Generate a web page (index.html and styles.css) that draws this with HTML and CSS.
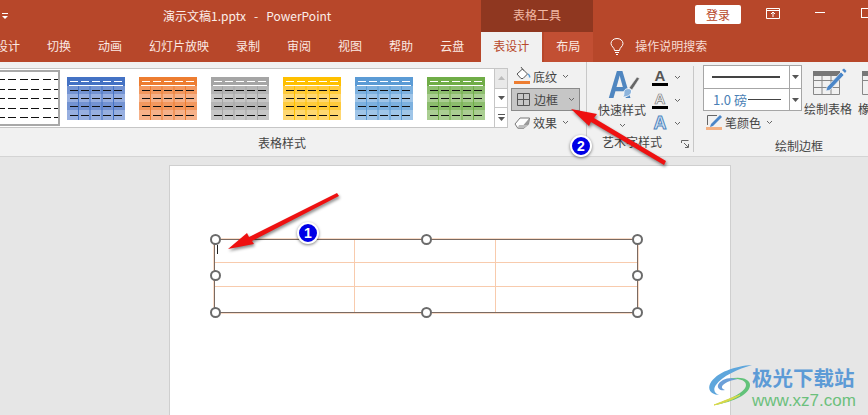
FILE: index.html
```html
<!DOCTYPE html>
<html lang="zh">
<head>
<meta charset="utf-8">
<title>演示文稿1.pptx - PowerPoint</title>
<link rel="stylesheet" href="styles.css">
</head>
<body>
<svg class="defs" width="0" height="0" aria-hidden="true">
  <symbol id="chev" viewBox="0 0 7 5"><path d="M1 1l2.5 2.5L6 1" fill="none" stroke="#666" stroke-width="1"/></symbol>
  <symbol id="tri" viewBox="0 0 7 4"><path d="M0 0h7L3.5 4z" fill="#555"/></symbol>
  <symbol id="swatch" viewBox="0 0 58 43">
    <rect width="58" height="43" style="fill:var(--dark)"/>
    <rect y="9" width="58" height="8" style="fill:var(--mid)"/>
    <rect y="17" width="58" height="8" style="fill:var(--light)"/>
    <rect y="25" width="58" height="8" style="fill:var(--mid)"/>
    <rect y="33" width="58" height="10" style="fill:var(--light)"/>
    <path d="M11.5 9v34M23 9v34M35 9v34M46.5 9v34" style="stroke:var(--dark)" stroke-width="1"/>
    <path d="M2 8.500h54" stroke="#fff" stroke-width="1"/>
    <path d="M3 4.500h8M14 4.500h8M25 4.500h8M36 4.500h8M47 4.500h8" stroke="#fff" stroke-width="1"/>
    <path d="M3 13.500h8M14 13.500h8M25 13.500h8M36 13.500h8M47 13.500h8M3 21.500h8M14 21.500h8M25 21.500h8M36 21.500h8M47 21.500h8M3 29.500h8M14 29.500h8M25 29.500h8M36 29.500h8M47 29.500h8M3 38.500h8M14 38.500h8M25 38.500h8M36 38.500h8M47 38.500h8" stroke="#111" stroke-width="1"/>
  </symbol>
</svg>

<div class="app">
  <header class="titlebar">
    <div class="qat"><svg class="qat-icon" width="6" height="7" viewBox="0 0 6 7"><path d="M0 .5h6" stroke="#fff"/><path d="M0 3h6L3 6z" fill="#fff"/></svg></div>
    <div class="doc-title">演示文稿1.pptx&nbsp;&nbsp; - &nbsp;&nbsp;PowerPoint</div>
    <div class="context-title">表格工具</div>
    <button class="login">登录</button>
    <svg class="win-icon" width="14" height="11" viewBox="0 0 14 11"><path d="M.5.500h13v10H.5zM.5 2.500h13M7 9V4.500M5 6l2-2 2 2" fill="none" stroke="#fff"/></svg>
    <span class="win-min"></span>
    <span class="win-max"></span>
  </header>

  <nav class="tabs">
    <span class="tab">设计</span>
    <span class="tab">切换</span>
    <span class="tab">动画</span>
    <span class="tab">幻灯片放映</span>
    <span class="tab">录制</span>
    <span class="tab">审阅</span>
    <span class="tab">视图</span>
    <span class="tab">帮助</span>
    <span class="tab tab-last">云盘</span>
    <span class="tab tab-active">表设计</span>
    <span class="tab tab-layout">布局</span>
    <svg class="bulb" width="14" height="17" viewBox="0 0 14 17"><path d="M4.500 12.500C4.500 9.500 1 8.500 1 5.500a6 5 0 0 1 12 0c0 3-3.500 4-3.500 7zM5 14.500h4M6 16.500h2" fill="none" stroke="#fff"/></svg>
    <span class="tell">操作说明搜索</span>
  </nav>

  <section class="ribbon">
    <div class="group group-styles">
      <div class="group-body">
        <div class="gallery">
          <div class="swatch-plain">
            <span class="dash-row"></span><span class="dash-row"></span><span class="dash-row"></span><span class="dash-row"></span><span class="dash-row"></span>
          </div>
          <svg class="swatch s-blue"><use href="#swatch"/></svg>
          <svg class="swatch s-orange"><use href="#swatch"/></svg>
          <svg class="swatch s-grey"><use href="#swatch"/></svg>
          <svg class="swatch s-gold"><use href="#swatch"/></svg>
          <svg class="swatch s-sky"><use href="#swatch"/></svg>
          <svg class="swatch s-green"><use href="#swatch"/></svg>
        </div>
        <div class="scroller">
          <span class="scroll-btn scroll-up"><svg width="7" height="4" viewBox="0 0 7 4"><path d="M0 4h7L3.500 0z" fill="#bbb"/></svg></span>
          <span class="scroll-btn"><svg width="7" height="4"><use href="#tri"/></svg></span>
          <span class="scroll-btn scroll-more"><i class="more-bar"></i><svg width="7" height="4"><use href="#tri"/></svg></span>
        </div>
        <div class="cmd-stack">
          <div class="cmd">
            <svg class="cmd-icon" width="17" height="18" viewBox="0 0 17 18"><path d="M3 7l5.500-5 5 5-4.500 4.500H7z" fill="#fff" stroke="#555"/><path d="M7 0l2.500 3.500" stroke="#555"/><path d="M14 7c1.500 1 2 2 1.500 3.500" fill="none" stroke="#5b9bd5" stroke-width="1.500"/><rect y="14" width="16" height="3" fill="#ed7d31"/></svg>
            <span>底纹</span><svg class="chev"><use href="#chev"/></svg>
          </div>
          <div class="cmd cmd-on">
            <svg class="cmd-icon" width="15" height="15" viewBox="0 0 15 15"><path d="M1.500 1.500h12v12h-12zM7.500 1.500v12M1.500 7.500h12" fill="none" stroke="#555"/></svg>
            <span>边框</span><svg class="chev chev-on"><use href="#chev"/></svg>
          </div>
          <div class="cmd">
            <svg class="cmd-icon" width="17" height="14" viewBox="0 0 17 14"><path d="M1 8l5-6h9.500l-1 6-5 4.500H4z" fill="#fdfdfd" stroke="#777"/><path d="M5 9h9.500l1-7L9.500 9z" fill="#9a9a9a"/><path d="M5 9l-1.500 3.500h5.500l5.500-3.500z" fill="#bdbdbd"/></svg>
            <span>效果</span><svg class="chev"><use href="#chev"/></svg>
          </div>
        </div>
      </div>
      <div class="group-label">表格样式</div>
    </div>

    <div class="group group-art">
      <div class="group-body">
        <div class="quick">
          <div class="quick-art">
            <span class="big-a">A</span>
            <svg class="brush" width="38" height="33" viewBox="0 0 38 33">
              <path d="M23 21L31 10l2.500 1.500L26 23z" fill="#666" stroke="#f1f1f1" stroke-width=".6"/>
              <path d="M20 22c3-1 6 0 5.500 3-.5 3-4 5-9 5 1.500-1.500 1.500-3 1.500-5 0-1.500 1-2.500 2-3z" fill="#8db4dc" stroke="#fff" stroke-width=".8"/>
            </svg>
          </div>
          <span class="quick-text">快速样式</span>
          <svg class="chev chev-under"><use href="#chev"/></svg>
        </div>
        <div class="a-stack">
          <div class="a-row"><span class="a-wrap"><span class="a a-fill">A</span><i class="a-bar"></i></span><svg class="chev"><use href="#chev"/></svg></div>
          <div class="a-row"><span class="a-wrap"><span class="a a-outline">A</span><i class="a-bar"></i></span><svg class="chev"><use href="#chev"/></svg></div>
          <div class="a-row"><span class="a-wrap"><span class="a a-effect">A</span></span><svg class="chev"><use href="#chev"/></svg></div>
        </div>
      </div>
      <div class="group-label label-art">艺术字样式
        <svg class="launcher" width="8" height="8" viewBox="0 0 8 8"><path d="M.5 3V.5H7.500M3 3l4 4M7.500 4v3.500H4" fill="none" stroke="#666"/></svg>
      </div>
    </div>

    <div class="group group-draw">
      <div class="group-body draw-body">
        <div class="pen-col">
          <div class="line-select"><span class="line-main"><i class="line-thick"></i></span><span class="line-drop"><svg width="7" height="4"><use href="#tri"/></svg></span></div>
          <div class="line-select line-second"><span class="line-main"><span class="weight">1.0 磅</span><i class="line-thin"></i></span><span class="line-drop"><svg width="7" height="4"><use href="#tri"/></svg></span></div>
          <div class="cmd pen-color">
            <svg class="cmd-icon" width="17" height="18" viewBox="0 0 17 18"><path d="M1.500 12V2.500H11" fill="none" stroke="#666"/><path d="M5 11l9-9 2 2-9 9-3 1z" fill="#4a86c8"/><rect y="14" width="16" height="3" fill="#f4b183"/></svg>
            <span>笔颜色</span><svg class="chev"><use href="#chev"/></svg>
          </div>
        </div>
        <div class="tool">
          <svg width="34" height="28" viewBox="0 0 34 28"><path d="M.5 4.500h26v22H.5zM.5 12.500h26M.5 19.500h26M9 8v19M18 8v19" fill="none" stroke="#888"/><rect width="27" height="5" y="3" fill="#777"/><path d="M14 19L28 4l3 3-14 15-4 1z" fill="#4a86c8" stroke="#f1f1f1" stroke-width=".7"/><path d="M29 2l2-1.500 2.500 2.500L32 5z" fill="#4a86c8"/></svg>
          <span>绘制表格</span>
        </div>
        <div class="tool tool-cut">
          <svg width="34" height="28" viewBox="0 0 34 28"><path d="M.5 4.500h26v22H.5zM.5 12.500h26" fill="none" stroke="#888"/><rect width="27" height="5" y="3" fill="#777"/></svg>
          <span>橡皮擦</span>
        </div>
      </div>
      <div class="group-label label-draw">绘制边框</div>
    </div>
  </section>

  <main class="workspace">
    <div class="slide">
      <div class="table-frame">
        <div class="cell"><i class="caret"></i></div><div class="cell"></div><div class="cell"></div>
        <div class="cell"></div><div class="cell"></div><div class="cell"></div>
        <div class="cell"></div><div class="cell"></div><div class="cell"></div>
        <i class="handle h-tl"></i><i class="handle h-tc"></i><i class="handle h-tr"></i>
        <i class="handle h-ml"></i><i class="handle h-mr"></i>
        <i class="handle h-bl"></i><i class="handle h-bc"></i><i class="handle h-br"></i>
      </div>
    </div>
  </main>

  <svg class="arrows" width="868" height="415" viewBox="0 0 868 415" aria-hidden="true">
    <polygon points="228,249 247,233 249,237 337,193 339,196 252,241 254,244" fill="#ee1111"/>
    <polygon points="571,109 597,114 594,118 666,161 664,165 591,122 589,126" fill="#ee1111"/>
  </svg>
  <span class="badge badge-one">1</span>
  <span class="badge badge-two">2</span>

  <div class="watermark">
    <svg class="wm-logo" width="48" height="42" viewBox="0 0 48 42">
      <path d="M44 1C28 2 8 8 2 20c-3 7 3 11 9 11-5-2-6-6-3-10C14 12 30 5 44 1z" fill="#5ea6dc"/>
      <path d="M30 15c-9-3-18 1-20 6-1 4 3 6 7 5-3-1-4-3-2-5 3-3 9-5 15-6z" fill="#6c9fd8"/>
      <path d="M22 15c8-1 16 1 16 6 0 7-14 13-32 20 20-3 36-11 36-20 0-6-10-9-20-6z" fill="#62c27a"/>
      <path d="M6 41c10-2 20-6 26-10-6 2-16 6-26 10z" fill="#d9d94a" stroke="#d9d94a"/>
    </svg>
    <div class="wm-text">
      <span class="wm-cn">极光下载站</span>
      <span class="wm-url">www.xz7.com</span>
    </div>
  </div>
</div>
</body>
</html>
```

FILE: styles.css
```css
* { box-sizing: border-box; }
html, body { margin: 0; padding: 0; }
body { width: 868px; height: 415px; overflow: hidden; font-family: "Noto Sans CJK SC", "Noto Sans", sans-serif; font-size: 12px; color: #444; }
.defs { position: absolute; }
svg { display: block; flex: none; }
i { display: block; }

.app { position: relative; width: 868px; height: 415px; overflow: hidden; display: flex; flex-direction: column; background: #e6e6e6; }

/* title bar */
.titlebar { height: 32px; flex: none; background: #b7472a; color: #fff; display: flex; align-items: center; overflow: hidden; }
.qat { width: 163px; flex: none; padding-left: 2px; }
.doc-title { width: 318px; flex: none; line-height: 30px; font-size: 12px; color: #fbeee9; white-space: nowrap; }
.context-title { width: 112px; flex: none; height: 32px; line-height: 30px; text-align: center; background: #8f3720; color: #f2b9a4; }
.login { margin-left: 102px; width: 46px; height: 19px; flex: none; padding: 0; border: 0; border-radius: 2px; background: #fff; color: #b7472a; font: 12px/19px "Noto Sans CJK SC", sans-serif; margin-top: -4px; }
.win-icon { margin-left: 25px; margin-top: -6px; }
.win-min { width: 10px; height: 1px; margin-left: 35px; margin-top: -8px; background: #fff; flex: none; }
.win-max { width: 12px; height: 10px; margin-left: 36px; margin-top: -6px; border: 1px solid #fff; flex: none; }

/* tabs */
.tabs { height: 30px; flex: none; background: #b7472a; color: #fff; display: flex; align-items: stretch; overflow: hidden; }
.tab { padding: 0 13.500px; line-height: 28px; color: #fbe9e3; white-space: nowrap; }
.tab:first-child { margin-left: -17.500px; }
.tab-last { margin-right: 3.500px; }
.tab-active { padding: 0 12px; width: 61px; background: #f1f1f1; color: #b7472a; }
.tab-layout { padding: 0 12px; width: 49px; margin-left: 2px; background: #c24f33; }
.bulb { margin: 6px 0 0 17px; }
.tell { margin-left: 11px; line-height: 28px; color: #f6dcd3; white-space: nowrap; }

/* ribbon */
.ribbon { height: 95px; flex: none; background: #f1f1f1; border-bottom: 1px solid #d4d4d4; display: flex; overflow: hidden; }
.group { display: flex; flex-direction: column; flex: none; }
.group-body { height: 76px; display: flex; }
.group-label { height: 18px; line-height: 16px; text-align: center; white-space: nowrap; }
.group-styles { width: 587px; border-right: 1px solid #c8c8c8; margin-bottom: 4px; }
.group-styles .group-label { width: 564px; }
.group-art { width: 107px; border-right: 1px solid #c8c8c8; margin-bottom: 4px; margin-top: 4px; }
.group-art .group-body { height: 72px; }
.group-draw { width: 174px; }
.label-draw { padding-left: 36px; }

.gallery { width: 494px; height: 60px; margin-top: 6px; padding-left: 0; background: #fff; border-top: 1px solid #c6c6c6; border-bottom: 1px solid #c6c6c6; display: flex; align-items: center; gap: 14px; overflow: hidden; flex: none; }
.swatch { width: 58px; height: 43px; margin-top: 1px; }
.s-blue { --dark: #4472c4; --mid: #7393d2; --light: #97afe0; }
.s-orange { --dark: #ed7d31; --mid: #f2985f; --light: #f6b189; }
.s-grey { --dark: #a5a5a5; --mid: #b5b5b5; --light: #c6c6c6; }
.s-gold { --dark: #ffc000; --mid: #ffcb3d; --light: #ffd770; }
.s-sky { --dark: #5b9bd5; --mid: #7db1df; --light: #9fc5e8; }
.s-green { --dark: #70ad47; --mid: #8cbd6d; --light: #aace92; }

.swatch-plain { width: 60px; height: 56px; flex: none; margin-left: 0; margin-right: -7px; padding: 6px 0; background: #fff; border: 2px solid #a8a8a8; border-left: 0; box-shadow: inset 0 0 0 1px #fff; display: flex; flex-direction: column; justify-content: space-between; }
.dash-row { height: 1px; margin-top: 1px; background: repeating-linear-gradient(90deg, #111 0 8px, transparent 8px 11.500px); background-position: -3px 0; }

.scroller { width: 14px; height: 60px; margin-top: 6px; display: flex; flex-direction: column; border: 1px solid #c6c6c6; background: #fff; flex: none; }
.scroll-btn { flex: 1; display: flex; flex-direction: column; align-items: center; justify-content: center; gap: 2px; border-top: 1px solid #c6c6c6; }
.scroll-up { border-top: 0; background: #e9e9e9; }
.more-bar { width: 7px; height: 1px; background: #555; }

.cmd-stack { margin: 2px 0 0 3px; width: 72px; display: flex; flex-direction: column; }
.cmd { height: 23px; padding-left: 3px; display: flex; align-items: center; white-space: nowrap; }
.cmd-stack .cmd:first-child { height: 24px; }
.cmd-icon { width: 17px; margin-right: 2px; }
.cmd-on { width: 69px; height: 23px; padding-left: 3px; background: #c6c6c6; border: 1px solid #8a8a8a; }
.chev { width: 7px; height: 5px; margin-left: 5px; }
.chev-on { margin-left: 10px; }

.quick { width: 64px; padding-top: 1px; margin-left: 3px; display: flex; flex-direction: column; align-items: center; }
.quick-art { position: relative; width: 38px; height: 33px; margin-left: 6px; flex: none; }
.big-a { display: block; width: 27px; margin-left: 2px; padding-top: 4px; font: bold 38px/28px "Liberation Sans", sans-serif; color: #4f86c0; transform: scaleX(.85); transform-origin: left center; }
.brush { position: absolute; left: 0; top: 0; }
.quick-text { line-height: 16px; margin-top: 2px; white-space: nowrap; }
.chev-under { margin: 5px 0 0 0; }
.a-stack { margin-left: -2px; display: flex; flex-direction: column; }
.a-row { height: 23px; display: flex; align-items: center; }
.a-wrap { width: 16px; height: 20px; display: flex; flex-direction: column; align-items: center; }
.a { font: bold 15px/15px "Liberation Sans", sans-serif; color: #555; }
.a-outline { color: #f4f4f4; -webkit-text-stroke: .7px #777; }
.a-effect { font-size: 18px; line-height: 19px; color: #dbe8f5; -webkit-text-stroke: 1px #4f86c0; }
.a-bar { width: 16px; height: 3px; background: #000; }
.a-row .chev { margin-left: 6px; }
.label-art { position: relative; padding-right: 16px; line-height: 14px; }
.launcher { position: absolute; right: 4px; top: 5px; }

.draw-body { padding-left: 9px; }
.pen-col { width: 99px; flex: none; padding-top: 3px; }
.line-select { width: 99px; height: 24px; border: 1px solid #a6a6a6; background: #fff; display: flex; }
.line-second { margin-top: -1px; height: 23px; }
.line-main { flex: 1; padding: 0 8px; display: flex; align-items: center; }
.line-drop { width: 12px; border-left: 1px solid #a6a6a6; display: flex; align-items: center; justify-content: center; }
.line-thick { width: 68px; height: 2px; background: #444; }
.line-thin { flex: 1; height: 1px; background: #444; margin-left: 1px; }
.weight { color: #4a7fb5; white-space: nowrap; margin-left: 1px; font-size: 13px; }
.pen-color { height: 20px; margin-top: 1px; }
.tool { width: 48px; margin-left: 2px; padding-top: 6px; display: flex; flex-direction: column; align-items: center; flex: none; }
.tool svg { margin-left: 3px; }
.tool span { line-height: 16px; margin-top: 5px; white-space: nowrap; }
.tool-cut { width: 48px; margin-left: 6px; }
.tool-cut span { align-self: flex-start; }
.tool-cut svg { align-self: flex-start; margin-left: 4px; }

/* slide */
.workspace { flex: 1; min-height: 0; padding: 8px 0 0 169px; overflow: hidden; }
.slide { width: 562px; height: 260px; background: #fff; border: 1px solid #cfcfcf; padding: 73px 0 0 44px; }
.table-frame { position: relative; width: 424px; height: 74px; border: 1px solid #7a6a62; outline: 1px solid #f9dcc8; display: grid; grid-template-columns: 140px 141px 1fr; grid-template-rows: 23px 24px 1fr; }
.cell { border-right: 1px solid #f8cbad; border-bottom: 1px solid #f8cbad; }
.cell:nth-child(3n) { border-right: 0; }
.cell:nth-child(n+7) { border-bottom: 0; }
.caret { width: 1px; height: 9px; margin: 5px 0 0 2px; background: #222; }
.handle { position: absolute; width: 11px; height: 11px; border: 2px solid #6b6b6b; border-radius: 50%; background: #fff; margin: -5.500px 0 0 -5.500px; }
.h-tl, .h-tc, .h-tr { top: -1px; }
.h-ml, .h-mr { top: 35px; }
.h-bl, .h-bc, .h-br { top: 72px; }
.h-tl, .h-ml, .h-bl { left: 0; }
.h-tc, .h-bc { left: 211px; }
.h-tr, .h-mr, .h-br { left: 422px; }

/* annotations */
.arrows { position: absolute; left: 0; top: 0; filter: drop-shadow(1px 2px 1.500px rgba(0,0,0,.45)); pointer-events: none; }
.badge { position: absolute; width: 22px; height: 22px; border: 2px solid #fff; border-radius: 50%; background: #0000e6; color: #fff; font: bold 14px/18px "Liberation Sans", sans-serif; text-align: center; box-shadow: 0 1px 3px rgba(0,0,0,.5); }
.badge-one { left: 297px; top: 222px; }
.badge-two { left: 570px; top: 135px; }

.watermark { position: absolute; left: 708px; top: 364px; display: flex; }
.wm-text { margin: 2px 0 0 -4px; display: flex; flex-direction: column; }
.wm-cn { font: bold 20.500px/22px "Noto Sans CJK SC", sans-serif; color: #5d9bd6; white-space: nowrap; }
.wm-url { font: 17px/20px "Liberation Sans", sans-serif; color: #6cc07c; margin-top: 3px; white-space: nowrap; }
```
